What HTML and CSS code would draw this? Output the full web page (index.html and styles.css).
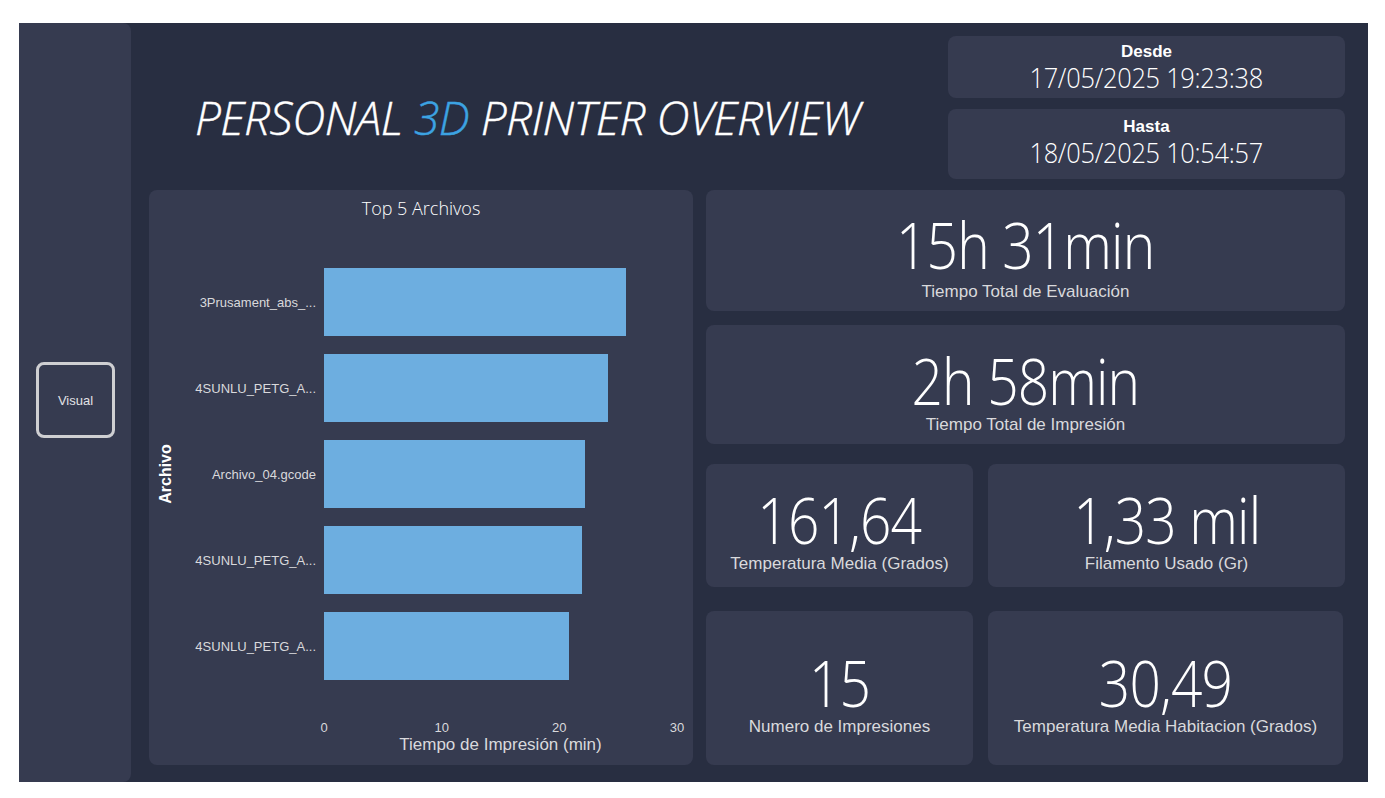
FILE: index.html
```html
<!DOCTYPE html>
<html lang="es">
<head>
<meta charset="utf-8">
<title>Personal 3D Printer Overview</title>
<link rel="stylesheet" href="styles.css">
</head>
<body>
<div class="canvas">
  <aside class="sidebar">
    <div class="visual-btn">Visual</div>
  </aside>
  <main class="main">
    <header class="header">
      <h1 class="title">PERSONAL <span class="accent">3D</span> PRINTER OVERVIEW</h1>
      <div class="dates">
        <div class="date-card date-from">
          <div class="date-label">Desde</div>
          <div class="date-value">17/05/2025 19:23:38</div>
        </div>
        <div class="date-card date-to">
          <div class="date-label">Hasta</div>
          <div class="date-value">18/05/2025 10:54:57</div>
        </div>
      </div>
    </header>

    <section class="card chart">
      <div class="chart-title">Top 5 Archivos</div>
      <div class="chart-body">
        <div class="y-title"><span>Archivo</span></div>
        <div class="rows">
          <div class="row"><div class="row-label">3Prusament_abs_...</div><div class="track"><div class="bar" style="width:85.6%"></div></div></div>
          <div class="row"><div class="row-label">4SUNLU_PETG_A...</div><div class="track"><div class="bar" style="width:80.5%"></div></div></div>
          <div class="row"><div class="row-label">Archivo_04.gcode</div><div class="track"><div class="bar" style="width:73.9%"></div></div></div>
          <div class="row"><div class="row-label">4SUNLU_PETG_A...</div><div class="track"><div class="bar" style="width:73.1%"></div></div></div>
          <div class="row"><div class="row-label">4SUNLU_PETG_A...</div><div class="track"><div class="bar" style="width:69.4%"></div></div></div>
        </div>
      </div>
      <div class="ticks">
        <span class="tick">0</span><span class="tick">10</span><span class="tick">20</span><span class="tick">30</span>
      </div>
      <div class="x-title">Tiempo de Impresión (min)</div>
    </section>

    <section class="kpis">
      <div class="card kpi kpi-wide k1">
        <div class="kpi-value">15h 31min</div>
        <div class="kpi-label">Tiempo Total de Evaluación</div>
      </div>
      <div class="card kpi kpi-wide k2">
        <div class="kpi-value">2h 58min</div>
        <div class="kpi-label">Tiempo Total de Impresión</div>
      </div>
      <div class="kpi-grid g1">
        <div class="card kpi">
          <div class="kpi-value">161,64</div>
          <div class="kpi-label">Temperatura Media (Grados)</div>
        </div>
        <div class="card kpi">
          <div class="kpi-value">1,33 mil</div>
          <div class="kpi-label">Filamento Usado (Gr)</div>
        </div>
      </div>
      <div class="kpi-grid g2">
        <div class="card kpi">
          <div class="kpi-value">15</div>
          <div class="kpi-label">Numero de Impresiones</div>
        </div>
        <div class="card kpi narrow">
          <div class="kpi-value">30,49</div>
          <div class="kpi-label">Temperatura Media Habitacion (Grados)</div>
        </div>
      </div>
    </section>
  </main>
</div>
</body>
</html>
```
FILE: styles.css
```css
* { box-sizing: border-box; margin: 0; padding: 0; }

body {
  background: #ffffff;
  font-family: "Liberation Sans", Arial, sans-serif;
  color: #ffffff;
}

.canvas {
  margin: 23px 0 0 19px;
  width: 1349px;
  height: 759px;
  background: #282e41;
  display: flex;
}

.sidebar {
  width: 112px;
  flex: none;
  background: #363b50;
  border-radius: 0 8px 8px 0;
  display: flex;
  align-items: center;
  padding: 0 0 5px 17px;
}

.visual-btn {
  width: 79px;
  height: 76px;
  border: 3px solid #cfcfd2;
  border-radius: 8px;
  display: flex;
  align-items: center;
  justify-content: center;
  font-size: 13px;
  color: #e2e2e6;
}

.main {
  flex: 1;
  display: grid;
  grid-template-columns: 544px 639px;
  grid-template-rows: 143px 575px;
  column-gap: 13px;
  row-gap: 11px;
  padding: 13px 23px 17px 18px;
}

.header {
  grid-column: 1 / 3;
  display: flex;
  justify-content: space-between;
}

.title {
  font-family: "Open Sans", sans-serif;
  font-weight: 300;
  font-style: italic;
  font-size: 46px;
  letter-spacing: -0.5px;
  color: #ffffff;
  padding: 58px 0 0 46px;
  line-height: 1;
  white-space: nowrap;
  -webkit-text-stroke: 0.4px #ffffff;
}

.accent { color: #3ca3e2; -webkit-text-stroke-color: #3ca3e2; }

.dates {
  width: 397px;
  display: flex;
  flex-direction: column;
  gap: 11px;
}

.date-card {
  background: #363b50;
  border-radius: 8px;
  display: flex;
  flex-direction: column;
  align-items: center;
}

.date-from { height: 62px; padding-top: 6px; }
.date-to { height: 70px; padding-top: 8px; }

.date-label {
  font-weight: bold;
  font-size: 17px;
  line-height: 20px;
}

.date-value {
  font-family: "Open Sans", sans-serif;
  font-weight: 300;
  font-size: 27px;
  line-height: 32px;
  letter-spacing: -0.3px;
  transform: scaleX(0.94);
}

.card {
  background: #363b50;
  border-radius: 8px;
}

/* chart */
.chart {
  display: flex;
  flex-direction: column;
  padding: 0 16px 10px 0;
}

.chart-title {
  height: 69px;
  padding: 8px 0 0 16px;
  text-align: center;
  font-family: "Open Sans", sans-serif;
  font-weight: 300;
  font-size: 18px;
  line-height: 20px;
}

.chart-body {
  display: flex;
  height: 430px;
}

.y-title {
  width: 34px;
  display: flex;
  align-items: center;
  justify-content: center;
}

.y-title span {
  transform: rotate(-90deg);
  font-size: 16px;
  font-weight: bold;
  white-space: nowrap;
  color: #ffffff;
}

.rows {
  flex: 1;
  display: flex;
  flex-direction: column;
}

.row {
  flex: 1;
  display: flex;
  align-items: center;
}

.row-label {
  width: 141px;
  padding-right: 8px;
  text-align: right;
  font-size: 13px;
  color: #d9d9dc;
  white-space: nowrap;
}

.track {
  flex: 1;
  height: 68px;
}

.bar {
  height: 100%;
  background: #6daee0;
}

.ticks {
  margin: 31px 0 0 175px;
  height: 16px;
  display: flex;
  justify-content: space-between;
  font-size: 13px;
  line-height: 16px;
  color: #d9d9dc;
}

.tick {
  width: 0;
  display: flex;
  justify-content: center;
}

.x-title {
  margin-left: 175px;
  text-align: center;
  font-size: 17px;
  line-height: 18px;
  color: #d9d9dc;
}

/* kpis */
.kpis {
  display: flex;
  flex-direction: column;
}

.kpi {
  display: flex;
  flex-direction: column;
  align-items: center;
  justify-content: center;
}

.k1 { height: 121px; padding-top: 15px; }
.k1 .kpi-label { margin-top: 6px; }
.k2 { height: 119px; margin-top: 14px; padding-top: 16px; }

.kpi-grid {
  display: grid;
  grid-template-columns: 267px 357px;
  column-gap: 15px;
}

.g1 { height: 123px; margin-top: 20px; }
.g1 .kpi { padding-top: 12px; }
.g2 { height: 154px; margin-top: 24px; }
.g2 .narrow { margin-right: 2px; }
.g2 .kpi { padding-top: 13px; }

.kpi-value {
  font-family: "Open Sans", sans-serif;
  font-weight: 300;
  font-size: 64px;
  line-height: 62px;
  letter-spacing: -1px;
  transform: scaleX(0.86);
  color: #ffffff;
}

.kpi-label {
  margin-top: 3px;
  font-size: 17px;
  line-height: 20px;
  color: #d9d9dc;
}
```
